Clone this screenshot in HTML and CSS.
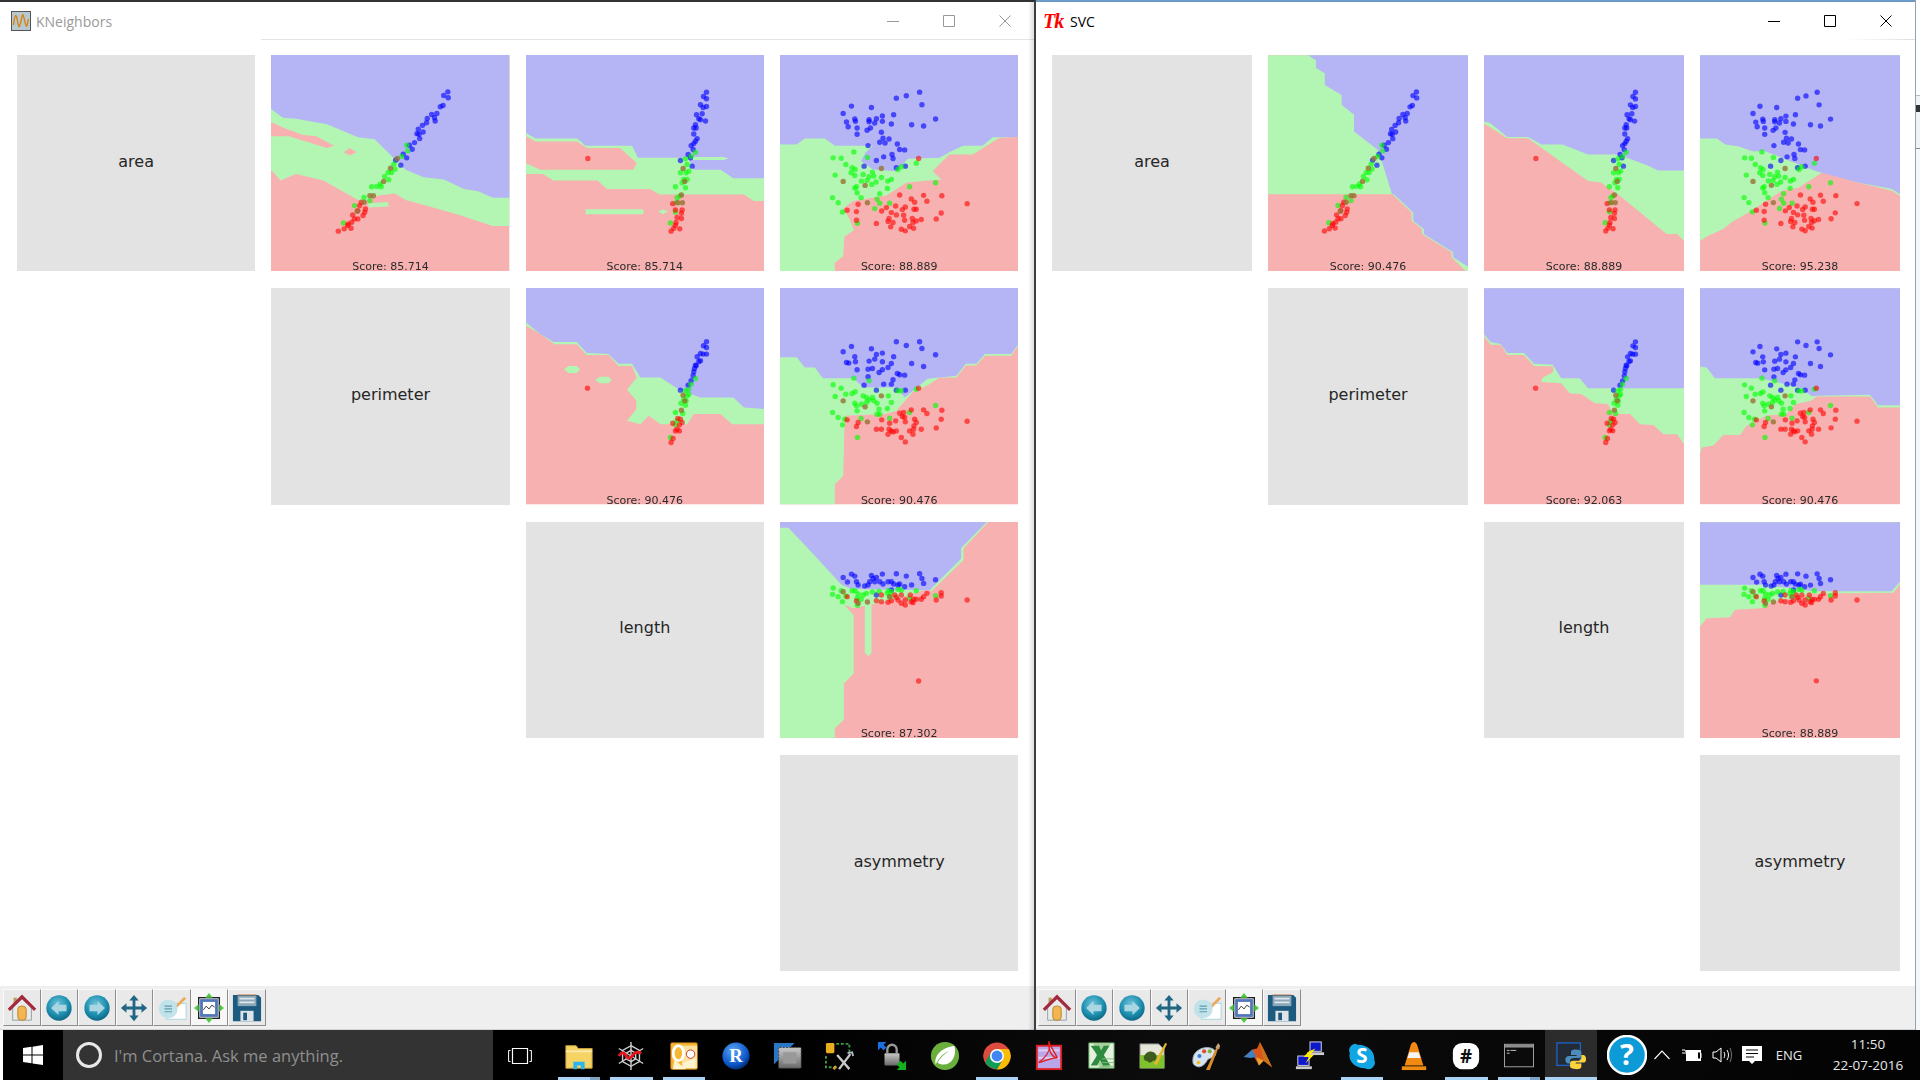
FILE: index.html
```html
<!DOCTYPE html>
<html lang="en">
<head>
<meta charset="utf-8">
<title>KNeighbors and SVC</title>
<link rel="stylesheet" href="styles.css">
</head>
<body>
<svg class="defs" width="0" height="0" aria-hidden="true">
  <defs>
    <radialGradient id="teal" cx="45%" cy="35%" r="70%"><stop offset="0" stop-color="#6fc3d8"/><stop offset=".6" stop-color="#1d8fb0"/><stop offset="1" stop-color="#0d5f7d"/></radialGradient>
    <radialGradient id="rball" cx="40%" cy="30%" r="75%"><stop offset="0" stop-color="#5aa6f5"/><stop offset=".7" stop-color="#0b56c8"/><stop offset="1" stop-color="#03235e"/></radialGradient>
    <linearGradient id="grey" x1="0" y1="0" x2="0" y2="1"><stop offset="0" stop-color="#c8c8c8"/><stop offset="1" stop-color="#6a6a6a"/></linearGradient>
    <symbol id="i-home" viewBox="0 0 32 32">
      <rect x="7" y="5" width="3.5" height="8" fill="#b79c62"/>
      <path d="M6 15 16 6l10 9v14H6z" fill="#e9eaea" stroke="#8fa0a4"/>
      <rect x="11.5" y="14" width="9" height="15" rx="3.5" fill="#f3b552" stroke="#b9842a"/>
      <path d="M2 18 16 4l14 14" fill="none" stroke="#a3293c" stroke-width="3.4"/>
    </symbol>
    <symbol id="i-back" viewBox="0 0 32 32">
      <circle cx="16" cy="16" r="13.5" fill="url(#teal)"/>
      <path d="M7.5 16 15.5 8.500V12.500H24V19.500H15.500V23.500z" fill="#a9d6e2"/>
    </symbol>
    <symbol id="i-fwd" viewBox="0 0 32 32">
      <circle cx="16" cy="16" r="13.5" fill="url(#teal)"/>
      <path d="M24.500 16 16.500 8.500V12.500H8V19.500H16.500V23.500z" fill="#a9d6e2"/>
    </symbol>
    <symbol id="i-move" viewBox="0 0 32 32">
      <path d="M16 2l5 6h-3.500v6.500H24V11l6 5-6 5v-3.500h-6.500V24H21l-5 6-5-6h3.500v-6.500H8V21l-6-5 6-5v3.500h6.500V8H11z" fill="#1f6785"/>
    </symbol>
    <symbol id="i-cfg" viewBox="0 0 32 32">
      <rect x="10" y="11" width="21" height="17" fill="#fff" stroke="#a8d5dd"/>
      <path d="M19 14 29 4l2 2-10 10z" fill="#eba95a"/>
      <circle cx="12" cy="17" r="10" fill="#bfe1e8" opacity=".95"/>
      <path d="M8 14h8M8 17h8M8 20h8" stroke="#5f9db0" stroke-width="1.300"/>
    </symbol>
    <symbol id="i-adj" viewBox="0 0 32 32">
      <rect x="5" y="5" width="22" height="22" fill="#fff" stroke="#222" stroke-width="1.500"/>
      <rect x="8" y="8" width="16" height="16" fill="#fff" stroke="#5177bb" stroke-width="3"/>
      <path d="M10 18l3-4 3 3 3-4 3 2" fill="none" stroke="#333"/>
      <path d="M16 0l4 5h-8zM16 32l-4-5h8zM0 16l5-4v8zM32 16l-5 4v-8z" fill="#50c845"/>
    </symbol>
    <symbol id="i-save" viewBox="0 0 32 32">
      <path d="M1 2h27l3 3v25H1z" fill="#1c5a80"/>
      <rect x="6" y="3" width="20" height="11" fill="#8ba7b8"/>
      <path d="M8 6h16M8 10h16" stroke="#dfe7ec" stroke-width="1.800"/>
      <rect x="9" y="19" width="14" height="11" fill="#dfe4e8"/>
      <rect x="12" y="21" width="4" height="8" fill="#1c5a80"/>
      <path d="M6 2h20" stroke="#c98a5a"/>
    </symbol>
  </defs>
</svg>

<div class="desktop">
  <div class="windows">
    <section class="window window-left">
      <header class="titlebar titlebar-left">
        <svg class="app-icon" viewBox="0 0 20 20"><rect x=".5" y=".5" width="19" height="19" fill="#b7c9ce" stroke="#555"/><path d="M2.500 14C4 2 5 2 6.500 10S8 18 10 10s1.500-9 3.500-1 2 9 4-1" fill="none" stroke="#d97f08" stroke-width="1.300"/></svg>
        <span class="win-title dim">KNeighbors</span>
        <div class="win-controls dim-controls">
          <svg viewBox="0 0 12 12"><path d="M0 6.500h12"/></svg>
          <svg viewBox="0 0 12 12"><path d="M.5.500h11v11H.5z"/></svg>
          <svg viewBox="0 0 12 12"><path d="M.5.500l11 11M11.500.500l-11 11"/></svg>
        </div>
      </header>
      <main class="matrix matrix-left">
        <div class="cell label">area</div>
        <div class="cell plot" data-regions="k1" data-dots="ap"><span class="score">Score: 85.714</span></div>
        <div class="cell plot" data-regions="k2" data-dots="al"><span class="score">Score: 85.714</span></div>
        <div class="cell plot" data-regions="k3" data-dots="as"><span class="score">Score: 88.889</span></div>
        <div class="cell label col2">perimeter</div>
        <div class="cell plot" data-regions="k4" data-dots="pl"><span class="score">Score: 90.476</span></div>
        <div class="cell plot" data-regions="k5" data-dots="ps"><span class="score">Score: 90.476</span></div>
        <div class="cell label col3">length</div>
        <div class="cell plot" data-regions="k6" data-dots="ls"><span class="score">Score: 87.302</span></div>
        <div class="cell label col4">asymmetry</div>
      </main>
      <footer class="toolbar">
        <button class="tool"><svg><use href="#i-home"/></svg></button>
        <button class="tool"><svg><use href="#i-back"/></svg></button>
        <button class="tool"><svg><use href="#i-fwd"/></svg></button>
        <button class="tool"><svg><use href="#i-move"/></svg></button>
        <button class="tool"><svg><use href="#i-cfg"/></svg></button>
        <button class="tool tool-light"><svg><use href="#i-adj"/></svg></button>
        <button class="tool"><svg><use href="#i-save"/></svg></button>
      </footer>
    </section>

    <section class="window window-right">
      <header class="titlebar titlebar-right">
        <span class="tk-logo">Tk</span>
        <span class="win-title">SVC</span>
        <div class="win-controls">
          <svg viewBox="0 0 12 12"><path d="M0 6.500h12"/></svg>
          <svg viewBox="0 0 12 12"><path d="M.5.500h11v11H.5z"/></svg>
          <svg viewBox="0 0 12 12"><path d="M.5.500l11 11M11.500.500l-11 11"/></svg>
        </div>
      </header>
      <main class="matrix matrix-right">
        <div class="cell label">area</div>
        <div class="cell plot" data-regions="s1" data-dots="ap"><span class="score">Score: 90.476</span></div>
        <div class="cell plot" data-regions="s2" data-dots="al"><span class="score">Score: 88.889</span></div>
        <div class="cell plot" data-regions="s3" data-dots="as"><span class="score">Score: 95.238</span></div>
        <div class="cell label col2">perimeter</div>
        <div class="cell plot" data-regions="s4" data-dots="pl"><span class="score">Score: 92.063</span></div>
        <div class="cell plot" data-regions="s5" data-dots="ps"><span class="score">Score: 90.476</span></div>
        <div class="cell label col3">length</div>
        <div class="cell plot" data-regions="s6" data-dots="ls"><span class="score">Score: 88.889</span></div>
        <div class="cell label col4">asymmetry</div>
      </main>
      <footer class="toolbar">
        <button class="tool"><svg><use href="#i-home"/></svg></button>
        <button class="tool"><svg><use href="#i-back"/></svg></button>
        <button class="tool"><svg><use href="#i-fwd"/></svg></button>
        <button class="tool"><svg><use href="#i-move"/></svg></button>
        <button class="tool"><svg><use href="#i-cfg"/></svg></button>
        <button class="tool tool-light"><svg><use href="#i-adj"/></svg></button>
        <button class="tool"><svg><use href="#i-save"/></svg></button>
      </footer>
    </section>
    <div class="sliver"></div>
  </div>

  <nav class="taskbar">
    <div class="start">
      <svg viewBox="0 0 20 20"><path d="M0 3l8.500-1.200V9.500H0zM9.500 1.700 20 0v9.500H9.500zM0 10.500h8.500v7.700L0 17zM9.500 10.500H20V20L9.500 18.400z" fill="#fff"/></svg>
    </div>
    <div class="cortana">
      <span class="ring"></span>
      <span class="cortana-text">I'm Cortana. Ask me anything.</span>
    </div>
    <div class="task task-view">
      <svg viewBox="0 0 24 18"><path d="M7.500 .5h15v15h-15z" transform="translate(-3 1)" fill="none" stroke="#fff" stroke-width="1.200"/><path d="M2.500 3.500H.6v11h1.900M21.500 3.500h1.900v11h-1.900" fill="none" stroke="#fff"/></svg>
    </div>
    <div class="tasks">
      <div class="task on stacked"><svg viewBox="0 0 32 32"><path d="M2 5h11l2 3h15v21H2z" fill="#f6d365" stroke="#c9a23c"/><path d="M2 11h28" stroke="#fbe9a8" stroke-width="2"/><path d="M10 30v-8h12v8h-4v-4h-4v4z" fill="#29b6f0"/></svg></div>
      <div class="task on"><svg viewBox="0 0 32 32"><g fill="none" stroke="#cfcfcf" stroke-width="1.500"><path d="M16 1v30M3 8l26 16M3 24 29 8"/><path d="M16 5l9 5 0 12-9 5-9-5V10z"/><path d="M16 10l5 3v6l-5 3-5-3v-6z"/></g><path d="M3 16c3-5 6-4 8 0s5 2 7-1 5-4 9-2" fill="none" stroke="#e8141c" stroke-width="3"/></svg></div>
      <div class="task on"><svg viewBox="0 0 32 32"><rect x="2" y="2" width="28" height="28" rx="1" fill="#f7b733" stroke="#d7881a"/><path d="M14 5h16v24H14z" fill="#fbe2a0"/><ellipse cx="10" cy="13" rx="5.500" ry="8" fill="none" stroke="#fff" stroke-width="3"/><path d="M6 20l12 10H4zM14 24l14-6v11H16z" fill="#fff3d0"/><circle cx="23" cy="14" r="4.500" fill="#fff" stroke="#c9302c"/></svg></div>
      <div class="task"><svg viewBox="0 0 32 32"><circle cx="16" cy="16" r="14.500" fill="url(#rball)"/><text x="16" y="22" class="icon-r">R</text></svg></div>
      <div class="task"><svg viewBox="0 0 32 32"><path d="M1 2h22L1 25z" fill="#2a76c6"/><rect x="6" y="7" width="24" height="22" rx="1" fill="url(#grey)" stroke="#444" stroke-dasharray="2 1.500"/><rect x="11" y="12" width="14" height="12" fill="#999"/></svg></div>
      <div class="task"><svg viewBox="0 0 32 32"><rect x="1" y="2" width="9" height="11" rx="1.500" fill="#e8b020"/><path d="M12 3h14v10M1 16v12h10" fill="none" stroke="#3f9a47" stroke-width="2" stroke-dasharray="3 2"/><path d="M13 15l13 15M27 14 15 30" stroke="#c9c9c9" stroke-width="2.500"/><path d="M12 27l-3 3" stroke="#d89a2a" stroke-width="3"/><path d="M24 13l5-1 1 4" fill="none" stroke="#aeb9c9" stroke-width="2"/></svg></div>
      <div class="task"><svg viewBox="0 0 32 32"><path d="M1 1h9l-3 3 3 3-3 3-3-3-3 3z" fill="#1b6fe0"/><rect x="8" y="13" width="16" height="13" rx="1" fill="url(#grey)"/><path d="M11 13V9a5 5 0 0 1 10 0v4" fill="none" stroke="#999" stroke-width="2.500"/><path d="M31 31h-10l3-3-3-3 4-4 3 3 3-3z" fill="#16b01e"/></svg></div>
      <div class="task"><svg viewBox="0 0 32 32"><circle cx="16" cy="16" r="15" fill="#6aaf3d"/><path d="M6 25C4 14 14 7 26 5c3 11-3 21-13 20-2 0-4-1-5-2 3-5 7-9 12-12-6 2-10 7-14 14z" fill="#fff"/></svg></div>
      <div class="task on"><svg viewBox="0 0 32 32"><circle cx="16" cy="16" r="14.500" fill="#dd4b3e"/><path d="M16 16 3.500 23A14.500 14.500 0 0 1 6 5.500z" fill="#dd4b3e"/><path d="M3.500 23 10 11l6 5 7 12A14.500 14.500 0 0 1 3.500 23z" fill="#0f9d58"/><path d="M16 8.500h12.500A14.500 14.500 0 0 1 16 30.500l7-12z" fill="#fbbc05"/><circle cx="16" cy="16" r="7.500" fill="#fff"/><circle cx="16" cy="16" r="5.800" fill="#4285f4"/></svg></div>
      <div class="task"><svg viewBox="0 0 32 32"><rect x="3" y="5" width="26" height="25" fill="#b9a5e8" stroke="#e01b1b" stroke-width="2"/><path d="M5 10h22M5 18h22" stroke="#d8ccf2" stroke-width="2.500"/><path d="M16 0c2 8 0 15-11 23 6-1 14-6 20-5-7-1-10-9-9-18zM16 2l9 16" fill="none" stroke="#e01b1b" stroke-width="1.400"/></svg></div>
      <div class="task"><svg viewBox="0 0 32 32"><path d="M3 2h27v27H3z" fill="#e4f1de" stroke="#4f9a4c"/><path d="M8 3h18L17 18 26 29H14" fill="#7dbd73" opacity=".6"/><path d="M5 5h9l2 5 3-5h6l-6 10 7 11h-8l-3-6-3 6H5l7-11z" fill="#2d8a3e"/><path d="M17 19h13M17 23h13M17 27h13" stroke="#7dbb76"/></svg></div>
      <div class="task"><svg viewBox="0 0 32 32"><path d="M2 3h20l6 6v20H2z" fill="#e6e6d8" stroke="#666"/><path d="M2 15h26v14H2z" fill="#7fc22d"/><path d="M6 17c3-7 10-7 13-3 2 4 0 8-3 7-2 3-6 2-6 0-2 1-4-1-4-4z" fill="#3e5c1e"/><path d="M17 24 29 2l2 1-11 23z" fill="#e5b62a"/></svg></div>
      <div class="task"><svg viewBox="0 0 32 32"><path d="M2 20c0-8 8-13 15-13s11 4 9 8-7 2-9 6-7 8-11 6-4-3-4-7z" fill="#d7e4ef" stroke="#9db0c3"/><circle cx="9" cy="16" r="2.200" fill="#3a7bd5"/><circle cx="14" cy="11" r="2.200" fill="#e2492c"/><circle cx="20" cy="11" r="2.200" fill="#7bb33a"/><circle cx="8" cy="23" r="2" fill="#f0c030"/><path d="M16 31 27 7l2 1-9 23z" fill="#d98b2b"/><path d="M26 7l3-5 2 3-1 4z" fill="#c9a27a"/></svg></div>
      <div class="task"><svg viewBox="0 0 32 32"><path d="M1 17l9-8 5-1 3-7 5 10 8 17-9-7-5 5-5-9z" fill="#d9551c"/><path d="M1 17l9-8 4 8-6 1z" fill="#3d82c4"/><path d="M18 1l5 10 8 17-9-7z" fill="#c8741a"/><path d="M14 17l8 4-5 5z" fill="#e8a22e"/></svg></div>
      <div class="task"><svg viewBox="0 0 32 32"><rect x="16" y="1" width="12" height="10" fill="#0d18c8" stroke="#ddd"/><path d="M13 12h18v3H13z" fill="#ccc"/><rect x="3" y="16" width="12" height="10" fill="#0d18c8" stroke="#ddd"/><path d="M1 27h17v3H1z" fill="#ccc"/><path d="M22 8l-6 7h4l-9 9 4-7H9l6-6z" fill="#ffea00"/></svg></div>
      <div class="task on"><svg viewBox="0 0 32 32"><path d="M9 3a7 7 0 0 0-6 10c-2 7 4 16 16 16a7 7 0 0 0 10-9c1-8-6-16-17-16-1 0-2 0-3-1z" fill="#12a5e3"/><text x="16" y="23" class="icon-s">S</text></svg></div>
      <div class="task"><svg viewBox="0 0 32 32"><path d="M16 1c1 0 3 1 4 5l6 20H6l6-20c1-4 3-5 4-5z" fill="#f08a12"/><path d="M11 12h10l2 6H9z" fill="#f4f4f4"/><path d="M3 27h26v4H3z" fill="#f08a12"/></svg></div>
      <div class="task on"><svg viewBox="0 0 32 32"><rect x="2" y="2" width="28" height="28" rx="10" fill="#fff"/><text x="16" y="23" class="icon-hash">#</text></svg></div>
      <div class="task on stacked"><svg viewBox="0 0 32 32"><rect x=".5" y="3.500" width="31" height="24" fill="#0b0b0b" stroke="#a8a8a8"/><path d="M1 4h30v3H1z" fill="#8c8c8c"/><path d="M3 10h3M3 13h3M7 10h6" stroke="#ccc"/></svg></div>
      <div class="task on current"><svg viewBox="0 0 32 32"><rect x="1" y="2" width="25" height="24" fill="#222b36" stroke="#1f5fc0" stroke-width="1.500"/><path d="M21 9c-4 0-5 1-5 3v3h6v1h-8c-3 0-4 2-4 4s1 4 3 4h2v-3c0-2 2-3 4-3h5c2 0 3-1 3-3v-3c0-2-2-3-6-3z" fill="#4b8bbe"/><path d="M22 30c4 0 5-1 5-3v-3h-6v-1h8c3 0 3-2 3-4s-1-4-3-4h-2v3c0 2-2 3-4 3h-5c-2 0-3 1-3 3v3c0 2 3 3 7 3z" fill="#ffd43b"/></svg></div>
    </div>
    <div class="help"><svg viewBox="0 0 40 40"><circle cx="20" cy="20" r="19" fill="#0c9bd7" stroke="#fff" stroke-width="2.500"/><text x="20" y="30" class="icon-help">?</text></svg></div>
    <div class="tray"><svg viewBox="0 0 16 10" class="tray-chev"><path d="M.5 9 8 1l7.500 8" fill="none" stroke="#fff" stroke-width="1.100"/></svg></div>
    <div class="tray"><svg viewBox="0 0 20 14" class="tray-batt"><path d="M0 2h3l1 2h2M0 5h6" stroke="#fff" fill="none"/><rect x="4.500" y="2.500" width="14" height="10" fill="#fff" stroke="#fff"/><rect x="16" y="4.500" width="2" height="6" fill="#000"/><path d="M19 5v5" stroke="#fff"/></svg></div>
    <div class="tray"><svg viewBox="0 0 20 16" class="tray-vol"><path d="M1 5h3l5-4v14l-5-4H1z" fill="none" stroke="#fff"/><path d="M12 5c1 2 1 4 0 6M15 3c2 3 2 7 0 10" fill="none" stroke="#fff"/><path d="M18 1c2 4 2 10 0 14" fill="none" stroke="#777"/></svg></div>
    <div class="tray"><svg viewBox="0 0 20 19" class="tray-msg"><path d="M0 0h20v15h-7l-3 3-3-3H0z" fill="#fff"/><path d="M4 4h12M4 7.500h12M4 11h8" stroke="#000"/></svg></div>
    <div class="lang">ENG</div>
    <div class="clock"><span>11:50</span><span>22-07-2016</span></div>
  </nav>
</div>
<script src="plots.js"></script>
</body>
</html>
```

FILE: styles.css
```css
* { box-sizing: border-box; }

html, body {
  margin: 0;
  height: 100%;
  background: #fff;
  overflow: hidden;
}

.defs { position: absolute; }

.desktop {
  width: 1920px;
  height: 1080px;
  display: flex;
  flex-direction: column;
  font-family: "Open Sans", "Noto Sans", sans-serif;
}

.windows {
  display: flex;
  height: 1030px;
}

.window {
  display: flex;
  flex-direction: column;
  background: #fff;
}

.window-left {
  position: relative;
  width: 1036px;
  border-right: 2px solid #3c3f42;
}

.window-left::after {
  content: "";
  position: absolute;
  top: 0;
  bottom: 0;
  right: 0;
  width: 6px;
  background: linear-gradient(to right, rgba(0,0,0,0), rgba(0,0,0,.13));
  pointer-events: none;
}

.window-right {
  width: 880px;
  border-right: 1px solid #8ca3b8;
}

.sliver {
  width: 4px;
  background: linear-gradient(to bottom, #fff 95px, #bbb 95px, #bbb 96px, #f2f2f2 96px, #f2f2f2 105px, #333 105px, #333 112px, #f2f2f2 112px, #f2f2f2 148px, #888 148px, #888 149px, #f6f6f6 149px);
}

.titlebar {
  position: relative;
  height: 40px;
  flex: none;
  display: flex;
  align-items: center;
  padding-left: 11px;
  border-top: 2px solid #333;
  margin-left: 0;
}

.titlebar-right {
  border-top-color: #6c9ac6;
  padding-left: 7px;
}

.titlebar::after {
  content: "";
  position: absolute;
  bottom: 0;
  height: 1px;
  background: #e4e4e4;
}

.titlebar-left::after { left: 261px; right: 0; }
.titlebar-right::after {
  right: 0;
  width: 70px;
  background: linear-gradient(to right, #fff, #dedede);
}

.app-icon { width: 20px; height: 20px; margin-right: 5px; }

.tk-logo {
  font-family: "Liberation Serif", serif;
  font-style: italic;
  font-weight: 700;
  font-size: 20px;
  letter-spacing: -1px;
  color: #f00;
  width: 24px;
  margin-right: 3px;
}

.win-title {
  font-size: 14px;
  color: #000;
}

.win-title.dim { color: #9a9a9a; }

.win-controls {
  margin-left: auto;
  display: flex;
  gap: 44px;
  padding-right: 23px;
}

.win-controls svg {
  width: 12px;
  height: 12px;
  fill: none;
  stroke: #000;
  stroke-width: 1;
}

.dim-controls svg { stroke: #999; }

.matrix {
  flex: 1;
  display: grid;
  padding-top: 15px;
  grid-template-rows: repeat(4, 216.33px);
  row-gap: 17px;
  column-gap: 16px;
  align-content: start;
}

.matrix-left {
  padding-left: 17px;
  grid-template-columns: repeat(4, 238.33px);
}

.matrix-right {
  padding-left: 16px;
  grid-template-columns: repeat(4, 200px);
}

.cell {
  position: relative;
  overflow: hidden;
  font-family: "DejaVu Sans", sans-serif;
}

.label {
  display: flex;
  align-items: center;
  justify-content: center;
  padding-bottom: 4px;
  background: #e3e3e3;
  color: #262626;
  font-size: 16px;
}

.col2 { grid-column: 2; }
.col3 { grid-column: 3; }
.col4 { grid-column: 4; }

.plot svg {
  display: block;
  width: 100%;
  height: 100%;
  filter: blur(.55px);
}

.score {
  position: absolute;
  left: 0;
  right: 0;
  bottom: -2px;
  text-align: center;
  font-size: 11px;
  line-height: 13px;
  color: #2b2b2b;
  filter: blur(.25px);
}

.toolbar {
  flex: none;
  height: 44px;
  display: flex;
  align-items: flex-start;
  padding: 3px 0 0 3px;
  background: #efefef;
  border-bottom: 1px solid #d0d4d8;
}

.window-right .toolbar { padding-left: 2px; }

.tool {
  width: 37.500px;
  height: 37px;
  padding: 0;
  display: flex;
  align-items: center;
  justify-content: center;
  background: #e9e9e9;
  border: 1px solid;
  border-color: #fafafa #8d8d8d #8d8d8d #fafafa;
}

.tool-light { background: #f7f7f7; }

.tool svg { width: 30px; height: 30px; }

.taskbar {
  flex: none;
  height: 50px;
  margin-left: 3px;
  display: flex;
  align-items: center;
  background: linear-gradient(100deg, #000 40%, #0c0c0c 60%, #030303 100%);
}

.start {
  width: 60px;
  height: 100%;
  display: flex;
  align-items: center;
  justify-content: center;
  background: #000;
}

.start svg { width: 20px; height: 20px; }

.cortana {
  width: 430px;
  height: 100%;
  display: flex;
  align-items: center;
  gap: 12px;
  padding-left: 13px;
  background: #333;
}

.ring {
  width: 26px;
  height: 26px;
  border: 3px solid #e8e8e8;
  border-radius: 50%;
}

.cortana-text {
  font-size: 16.500px;
  color: #8f8f8f;
  white-space: nowrap;
}

.task-view { margin-left: 1px; flex: none; }

.tasks { display: flex; height: 100%; margin-left: 7px; }

.task {
  position: relative;
  width: 52.200px;
  height: 50px;
  display: flex;
  align-items: center;
  justify-content: center;
}

.task svg { width: 30px; height: 30px; margin-top: 2px; }

.task-view svg { width: 24px; height: 18px; }

.task.on::after {
  content: "";
  position: absolute;
  left: 5px;
  right: 5px;
  bottom: 0;
  height: 3px;
  background: #a9d2f5;
}

.task.on.stacked::after {
  background: linear-gradient(to right, #a9d2f5 76%, #7fa3c2 76%);
}

.task.current { background: #2c2c2c; }
.task.current::after { left: 0; right: 0; }

.icon-r {
  font-family: "Liberation Serif", serif;
  font-size: 20px;
  font-weight: 700;
  fill: #fff;
  text-anchor: middle;
}

.icon-s, .icon-hash, .icon-help {
  font-family: "Open Sans", sans-serif;
  font-weight: 700;
  text-anchor: middle;
}

.icon-s { font-size: 22px; fill: #fff; }
.icon-hash { font-size: 20px; fill: #111; }
.icon-help { font-size: 29px; fill: #fff; }

.help {
  width: 40px;
  height: 40px;
  margin-left: 10px;
}

.help svg { display: block; width: 40px; height: 40px; }

.tray {
  width: 30px;
  display: flex;
  justify-content: center;
  align-items: center;
}

.tray-chev { width: 16px; height: 10px; }
.tray-batt { width: 20px; height: 14px; }
.tray-vol { width: 20px; height: 16px; }
.tray-msg { width: 20px; height: 19px; }

.lang {
  width: 44px;
  text-align: center;
  color: #e8e8e8;
  font-size: 13px;
}

.clock {
  flex: 1;
  padding-left: 5px;
  display: flex;
  flex-direction: column;
  align-items: center;
  color: #e8e8e8;
  font-size: 13.500px;
  line-height: 21px;
}
```

FILE: plots.js
```js
var NS = "http://www.w3.org/2000/svg";

var REGIONS = {
  k1: {
    g: ["0,0 100,0 100,79 93,79 79,74 66.5,70 56.5,67 52,64 45,65 38,68 22,58 10.5,55 4,58 0,53"],
    b: ["0,0 100,0 100,66 93,66 87,63 81,62 72.5,57.5 64,56.5 56.5,53 43.5,39 36.5,38 23.5,32 10.5,29.5 5,29 0,25"],
    r: ["0,31 6,34 13.5,37 19,37.5 26.5,42 23.5,43 16,40.5 7.5,37.5 0,37.5", "30.5,45 33,43 36,45 33,46.5"],
    i: ["40.5,68.5 49,68 49.5,70 41,70.5"]
  },
  k2: {
    g: ["0,0 100,0 100,67.5 95.5,67.5 91.5,64.5 56,64.5 52,62 34,62 30,58 11.5,58 7,55 0,55"],
    b: ["0,0 100,0 100,57 87,57 81.6,53 70.4,53 68,47.5 47,47.5 44.5,42 25,42 21.5,38.6 4,38.6 0,36"],
    r: ["0,37.5 4,40 21.5,40 25.5,43 39.5,43 46.5,50 45,53 6,53 0,50"],
    i: ["25,71.3 49,71.3 49.5,72.4 49,73.6 25,73.6", "55.5,72.4 57.5,71.3 59.5,72.4 57.5,73.6", "70,47.2 83,47.2 85,47.9 83,48.5 70,48.5"]
  },
  k3: {
    g: ["0,0 100,0 100,37.9 92,38.3 80.9,46 71,46 64,53.7 67.7,57.5 62,58 53,59 44.6,65 30.7,67.5 26.5,71 29.3,76 31,81 27,84 26.5,93 23,96 23,100 0,100"],
    b: ["0,0 100,0 100,37.9 89.3,38 85,42 76.8,42 71,45 67,47.5 53.7,48 48.8,53.7 39,52.9 34,49 36,45 39,42 23,42 18.8,38.6 10.4,38.6 7,41.4 0,41.4"]
  },
  k4: {
    g: ["0,0 100,0 100,63 86.5,63 81.6,58.3 70.4,58.3 67.6,63 56.4,63 51.5,59 48,63 42.4,61.4 46.3,56 46.3,52 42.4,47 46.5,41.4 44.5,36 38.8,36 34.6,31 25.5,31 21.3,26 12,26 6,21.3 0,17.5"],
    b: ["0,0 100,0 100,56 91.5,55.2 87,50.6 73,50.6 64,46.8 56.4,41.4 48,41.4 44.5,35 38.8,35 34.6,30.5 25.5,30 21.3,25 11.5,25 6,21.3 0,16"],
    i: ["16,37.5 17.8,36 21.3,36 22.7,37.5 21.3,39.3 17.8,39.3", "29,42.4 31,41 34.6,41 36,42.4 34.6,44 31,44"]
  },
  k5: {
    g: ["0,0 100,0 100,26.6 97,31.3 86,31.3 82.4,35.8 78,35.8 74,41.4 67,41.4 62,45 55.8,48 48.8,56.8 44,58.3 27.2,59 26.5,86.9 23,90.7 23,100 0,100"],
    b: ["0,0 100,0 100,26 97,30.5 86,30.5 82.4,35 78,35 74,40.6 62,42 52.3,50.6 48.8,46 35,46 30.7,41.7 18,41.7 14.6,36.7 10.4,36.7 7,32 0,32"]
  },
  k6: {
    g: ["0,0 87.4,0 77,12.3 77,17.6 63.5,32 62,30.7 54.4,33.7 39,38 30.7,39.9 27,38.3 30.9,43 30.9,70 26.8,74.6 26.8,91.4 23,95.3 23,100 0,100"],
    b: ["0,0 86.7,0 76,12 76,17 62.8,31.5 30,31 25.8,29 11.2,11.5 3.5,2.6 0,2.6"],
    i: ["35.6,38.3 38.4,38.3 38.4,60.6 37,62 35.6,60.6"]
  },
  s1: {
    g: ["0,0 100,0 100,100 99,100 91.8,93.6 91.8,91.2 77,82.8 77,80.5 71.8,76.7 71.8,72.9 62.2,64.4 0,64.4"],
    b: ["20,0 100,0 100,98 92.6,93.6 92.6,91.2 77.9,82.8 77.9,80.5 72.6,76.7 72.6,72.9 63,64.4 62,64.4 57.9,52 54.7,43.7 43,35.3 43,27.6 36.8,23 36.8,18.4 28.4,13.8 28.4,8.4 24,6 24,2.3"]
  },
  s2: {
    g: ["0,0 100,0 100,85.9 96.6,82.8 91.3,82.8 67,64.4 58.4,59 52,58.3 22,38.5 11.7,38.5 0,31.6"],
    b: ["0,0 100,0 100,53.4 87,53.4 81.5,51 67,46 52,46 39.3,41.4 28.7,41.4 22,37.9 11.7,37.9 3,31.4 0,30.7"]
  },
  s3: {
    g: ["0,0 100,0 100,65.2 96,62.8 79,59 62,53.7 49.5,61.3 41,62.8 24.2,72.8 15.8,77.3 11.6,80.5 4.2,83.6 0,85.9"],
    b: ["0,0 100,0 100,64.4 96,62 79,59 58,53.7 32.6,44.5 26.3,44.5 18.9,42.2 12.6,41.4 8.4,38.6 0,38.6"]
  },
  s4: {
    g: ["0,0 100,0 100,72.2 96.5,67.6 89.8,67.6 84.7,63.3 78,63 73,58.3 64.6,58.3 62,53.7 55.4,53.2 48.6,49 42.8,48.6 38.6,44 28.5,43.4 29.4,41.4 34.4,39 34.7,36.3 25,36 20,31 11.7,31 8.4,26.2 3.4,26.2 0,22.4"],
    b: ["0,0 100,0 100,46.3 52,46.3 47.8,41.7 38.6,41.7 34.4,35.5 25,35 20,30 11.7,30 8.4,25.9 3.4,25 0,21.3"]
  },
  s5: {
    g: ["0,0 100,0 100,55.2 89,55.2 85,50.2 58.3,50.2 55.8,52 47.5,53.7 43.3,58.3 33.3,59 23.3,63.7 20,68 11.7,68 6.7,72.8 0.8,73.8 0,76.9"],
    b: ["0,0 100,0 100,54.2 89,54.2 85,49.4 58.3,49.8 56,50 50,46 30,41.7 7.5,41.7 3.3,36.7 0,36.3"]
  },
  s6: {
    g: ["0,0 100,0 100,28.7 96.7,32.7 56.7,33 36.7,36.8 30.8,39.9 17.5,40.6 15,44 3.3,44.5 0,48.3"],
    b: ["0,0 100,0 100,27.6 95.8,32 56.7,32 30.8,29 0,29"]
  }
};

/* Scatter points: coordinates as read off a panel (left, width, top, height). */
var DOTS = {
  ap: { box: [787, 694, 166, 652],
    b: "1302,277 1290,288 1303,295 1288,318 1280,322 1270,342 1255,345 1263,355 1242,357 1265,365 1240,370 1228,378 1216,390 1230,398 1218,405 1212,403 1220,418 1205,430 1190,438 1198,450 1165,498 1172,465 1182,476 1150,483",
    g: "1182,438 1185,455 1168,472 1145,495 1148,510 1128,520 1138,520 1118,532 1130,542 1105,555 1095,562 1080,563 1108,563 1058,595 1075,605 1030,620 998,672",
    r: "1050,610 1062,630 1040,635 1025,648 1055,650 1040,660 1022,670 1010,680 1020,688 1000,690 983,697 1045,620 1030,660 1060,640 1012,675",
    m: "1155,478 1135,507 1115,547 1075,590 1085,590 1058,610 1038,637"
  },
  al: { box: [18, 713, 45, 652],
    b: "558,157 549,170 558,177 540,195 548,203 558,200 528,225 545,222 535,237 525,255 555,244 540,240 520,265 527,265 520,283 530,297 525,305 520,312 518,330 512,318 503,345 480,363 515,380 510,355",
    g: "525,338 512,350 495,358 505,395 497,400 490,420 500,420 485,430 495,445 465,442 470,475 465,518 450,551 480,400 478,470 467,490 500,375",
    r: "457,493 485,512 465,512 483,522 470,535 483,538 467,550 465,558 478,569 460,567 452,576 203,357",
    m: "488,387 493,426 483,467 472,490 486,490"
  },
  as: { box: [780, 717, 45, 652],
    b: "995,199 970,221 1055,203 1130,175 1160,168 1200,157 1207,195 1122,225 1088,229 1248,238 1212,259 1176,255 1115,253 1088,245 1070,237 1048,240 1048,246 1065,250 1052,265 1042,272 1085,278 1012,265 1005,238 1007,245 980,247 985,261 1012,284 1090,296 1108,298 1080,308 1096,310 1133,313 1140,330 1155,331 1045,318 1092,352 1117,345 1120,357 1070,363 1033,380 1130,385 1157,380",
    g: "940,355 964,356 1002,337 978,375 997,385 1006,390 994,400 1005,408 946,407 1043,354 1030,405 1058,398 1062,410 1048,412 1085,414 1025,425 1042,423 1069,428 1056,435 1010,442 1005,446 1012,460 1024,475 1104,425 1115,420 1103,447 1080,463 1072,480 1080,492 1065,508 938,475 955,490 968,518 1135,390 1145,382 1190,371 1170,442 1248,430 1110,492 1013,552",
    r: "1197,357 1015,495 1010,517 982,513 1010,543 1070,553 1086,515 1100,505 1128,500 1140,467 1175,479 1185,489 1212,468 1222,486 1267,469 1343,493 1265,521 1250,539 1205,541 1190,510 1183,510 1157,503 1148,511 1130,527 1115,520 1108,538 1120,550 1105,547 1113,563 1145,570 1157,575 1170,562 1182,567 1180,550 1190,545 1178,538 1155,543 1152,528",
    m: "1085,387 970,426 1036,438 1043,490"
  },
  pl: { box: [18, 713, 27, 648],
    b: "558,188 549,200 558,205 540,223 548,225 558,225 530,233 535,247 525,258 522,268 527,260 520,278 518,290 512,305 503,318 480,333 540,245",
    g: "525,298 512,315 505,330 495,335 505,345 497,365 482,372 495,378 465,400 487,403 490,360 470,425 465,437 450,475 500,350",
    r: "202,327 472,418 480,420 457,432 485,430 477,437 465,455 477,455 458,478 452,490 470,450",
    m: "488,348 493,365 483,393"
  },
  ps: { box: [780, 717, 27, 648],
    b: "995,202 970,218 1055,209 1070,226 1088,222 1130,188 1160,199 1200,188 1207,208 1122,233 1248,227 1212,262 1176,253 1115,253 1105,265 1088,272 1078,280 1058,268 1048,246 1065,240 1088,248 1045,270 1012,272 1005,233 1007,248 980,250 987,252 1045,293 1133,283 1140,287 1155,288 1120,302 1115,315 1092,315 1033,318 1070,333 1130,333 1157,333",
    g: "940,317 964,327 1002,297 978,345 997,343 1006,338 1048,305 946,352 1030,350 1058,355 1048,362 1040,355 1005,372 1010,380 1025,375 1012,395 1040,370 1072,372 1078,390 1106,350 1115,370 1103,388 1080,405 1072,405 1024,418 938,400 955,415 968,437 1135,335 1145,335 1190,330 1170,400 1248,379 1110,417 1013,475 975,420 1063,365",
    r: "1197,327 1015,430 1010,442 982,422 1070,450 1086,422 1085,450 1110,432 1128,425 1140,402 1175,392 1185,420 1212,392 1222,403 1267,393 1343,426 1265,420 1250,446 1205,450 1190,430 1183,440 1157,428 1148,412 1130,455 1115,455 1105,465 1120,458 1108,450 1145,475 1157,488 1170,455 1182,450 1180,465 1155,415 1152,400",
    m: "1085,350 970,365 1036,383 1043,428"
  },
  ls: { box: [780, 717, 725, 652],
    b: "970,892 995,882 1005,888 983,906 1010,905 1015,915 1035,918 1045,915 1050,905 1055,886 1070,892 1080,905 1088,882 1090,912 1105,905 1115,905 1122,912 1130,881 1135,915 1140,912 1160,888 1155,920 1176,915 1200,881 1207,895 1212,910 1248,899 1115,930 1070,945 1060,895 1065,905",
    g: "940,924 964,932 938,943 955,950 968,965 978,948 997,932 1006,932 1015,942 1012,955 1030,945 1040,940 1058,936 1078,934 1106,932 1115,935 1135,928 1145,930 1190,932 1170,955 1248,947 1110,950 1013,976 1024,958 1103,940",
    r: "1197,1204 1343,960 982,950 1010,963 1070,962 1085,945 1085,965 1105,967 1125,945 1135,960 1145,945 1157,960 1157,975 1145,970 1172,945 1175,965 1182,958 1190,958 1205,958 1212,950 1222,940 1250,960 1265,938 1265,948 1130,952 1115,962 1180,968",
    m: "970,935 1015,970 1043,966 1110,950"
  }
};

var DOT_COLORS = { b: "rgba(0,0,255,.62)", g: "rgba(0,255,0,.62)", r: "rgba(255,0,0,.6)", m: "rgba(150,115,50,.8)" };
var REGION_COLORS = { g: "#b3f6b3", b: "#b5b5f6", r: "#f8b1b1", i: "#b3f6b3" };

function el(name, attrs) {
  var node = document.createElementNS(NS, name);
  for (var k in attrs) node.setAttribute(k, attrs[k]);
  return node;
}

function scalePoints(points, w, h) {
  return points.split(" ").map(function (p) {
    var c = p.split(",");
    return (c[0] * w / 100).toFixed(2) + "," + (c[1] * h / 100).toFixed(2);
  }).join(" ");
}

document.querySelectorAll(".plot").forEach(function (plot) {
  var w = plot.clientWidth, h = plot.clientHeight;
  var svg = el("svg", { viewBox: "0 0 " + w + " " + h });
  svg.appendChild(el("rect", { width: w, height: h, fill: REGION_COLORS.r }));

  var regions = REGIONS[plot.dataset.regions];
  ["g", "b", "r", "i"].forEach(function (key) {
    (regions[key] || []).forEach(function (pts) {
      svg.appendChild(el("polygon", { points: scalePoints(pts, w, h), fill: REGION_COLORS[key] }));
    });
  });

  var dots = DOTS[plot.dataset.dots], box = dots.box;
  ["b", "g", "r", "m"].forEach(function (key) {
    dots[key].split(" ").forEach(function (p) {
      var c = p.split(",");
      svg.appendChild(el("circle", {
        cx: ((c[0] - box[0]) / box[1] * w).toFixed(2),
        cy: ((c[1] - box[2]) / box[3] * h).toFixed(2),
        r: 2.7,
        fill: DOT_COLORS[key]
      }));
    });
  });

  plot.insertBefore(svg, plot.firstChild);
});
```
